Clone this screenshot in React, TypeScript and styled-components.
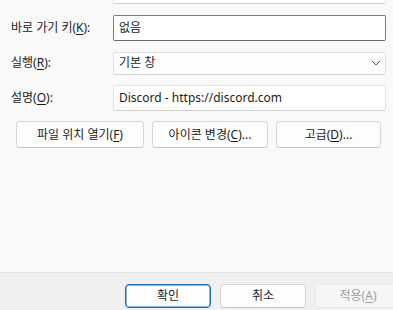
import React from "react";
import styled, { createGlobalStyle } from "styled-components";

const GlobalStyle = createGlobalStyle`
  html, body {
    margin: 0;
    padding: 0;
    overflow: hidden;
    background: #f9f9f9;
  }
  body {
    font-family: "Noto Sans", "Noto Sans CJK KR", sans-serif;
    font-size: 12px;
    color: #1b1b1b;
  }
`;

const Dialog = styled.div`
  width: 409px;
  height: 310px;
  display: flex;
  flex-direction: column;
  background: #f9f9f9;
`;

const Panel = styled.div`
  flex: 1;
  display: flex;
  flex-direction: column;
  padding: 0 0 0 11px;
`;

const FieldRow = styled.div<{ $top?: number }>`
  display: flex;
  align-items: center;
  height: 26px;
  margin-top: ${(p) => p.$top ?? 8}px;
`;

const Label = styled.label`
  width: 102px;
  line-height: 16px;
  white-space: nowrap;
`;

const Key = styled.span`
  text-decoration: underline;
  text-underline-offset: 2px;
`;

const Input = styled.div<{ $focus?: boolean }>`
  box-sizing: border-box;
  width: 273px;
  height: 26px;
  display: flex;
  align-items: center;
  padding-left: 5px;
  background: #fff;
  border: 1px solid ${(p) => (p.$focus ? "#7c7c7c" : "#e3e3e3")};
  border-bottom-color: ${(p) => (p.$focus ? "#6a6a6a" : "#d0d0d0")};
  border-radius: 2px;
  line-height: 16px;
  white-space: nowrap;
`;

const Select = styled(Input)`
  height: 23px;
  background: #fdfdfd;
  border-color: #e0e0e0;
  border-bottom-color: #d4d4d4;
  justify-content: space-between;
  padding-right: 4px;
`;

const ButtonRow = styled.div`
  display: flex;
  gap: 8px;
  margin-top: 10px;
  padding-left: 5px;
`;

const Button = styled.button<{ $w: number; $primary?: boolean; $disabled?: boolean }>`
  box-sizing: border-box;
  width: ${(p) => p.$w}px;
  height: 27px;
  padding: 0;
  font: inherit;
  line-height: 16px;
  color: ${(p) => (p.$disabled ? "#a0a0a0" : "#1b1b1b")};
  background: ${(p) => (p.$disabled ? "#f6f6f6" : "#fdfdfd")};
  border: 1px solid ${(p) => (p.$primary ? "#1d6fb8" : p.$disabled ? "#ececec" : "#d6d6d6")};
  border-bottom-color: ${(p) => (p.$primary ? "#1d6fb8" : p.$disabled ? "#e6e6e6" : "#c6c6c6")};
  border-radius: 4px;
  box-shadow: ${(p) => (p.$primary ? "inset 0 0 0 0.5px #1d6fb8" : "none")};
`;

const Footer = styled.div`
  box-sizing: border-box;
  height: 38px;
  flex-shrink: 0;
  border-top: 1px solid #e5e5e5;
  background: #f0f0f0;
  display: flex;
  justify-content: flex-end;
  align-items: flex-start;
  gap: 9px;
  padding: 11px 8px 0 0;
`;

const FooterButton = styled(Button)`
  height: 24px;
`;

const Chevron = () => (
  <svg width="10" height="6" viewBox="0 0 10 6">
    <path d="M1 1 L5 5 L9 1" fill="none" stroke="#5c5c5c" strokeWidth="1" />
  </svg>
);

export default function App() {
  return (
    <>
      <GlobalStyle />
      <Dialog>
        <Panel>
          {/* bottom edge of the target field, scrolled above the view */}
          <FieldRow $top={-22}>
            <Label />
            <Input />
          </FieldRow>
          <FieldRow $top={11}>
            <Label>
              바로 가기 키(<Key>K</Key>):
            </Label>
            <Input $focus>없음</Input>
          </FieldRow>
          <FieldRow $top={9}>
            <Label>
              실행(<Key>R</Key>):
            </Label>
            <Select>
              기본 창
              <Chevron />
            </Select>
          </FieldRow>
          <FieldRow $top={9}>
            <Label>
              설명(<Key>O</Key>):
            </Label>
            <Input>Discord - https://discord.com</Input>
          </FieldRow>
          <ButtonRow>
            <Button $w={128}>
              파일 위치 열기(<Key>F</Key>)
            </Button>
            <Button $w={116}>
              아이콘 변경(<Key>C</Key>)...
            </Button>
            <Button $w={105}>
              고급(<Key>D</Key>)...
            </Button>
          </ButtonRow>
        </Panel>
        <Footer>
          <FooterButton $w={86} $primary>
            확인
          </FooterButton>
          <FooterButton $w={86}>취소</FooterButton>
          <FooterButton $w={86} $disabled>
            적용(<Key>A</Key>)
          </FooterButton>
        </Footer>
      </Dialog>
    </>
  );
}
